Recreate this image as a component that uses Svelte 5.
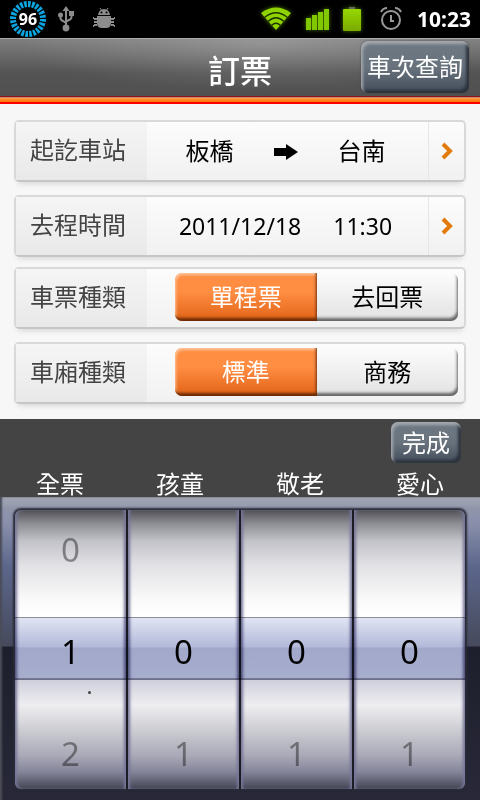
<script lang="ts">
  let origin = $state('板橋');
  let destination = $state('台南');
  let date = $state('2011/12/18');
  let time = $state('11:30');

  const choices = $state([
    { name: 'trip', label: '車票種類', options: ['單程票', '去回票'], value: '單程票' },
    { name: 'carriage', label: '車廂種類', options: ['標準', '商務'], value: '標準' }
  ]);

  const tickets = $state([
    { label: '全票', count: 1 },
    { label: '孩童', count: 0 },
    { label: '敬老', count: 0 },
    { label: '愛心', count: 0 }
  ]);

  const signalBars = [12, 15, 18, 21];
</script>

<div class="screen">
  <div class="status">
    <div class="status-side">
      <svg width="38" height="38" viewBox="0 0 38 38">
        <circle cx="19" cy="19" r="15" fill="none" stroke="#0aa5e0" stroke-width="6" pathLength="120" stroke-dasharray="3.4 1.6" />
        <text x="19" y="25" text-anchor="middle" class="level">96</text>
      </svg>
      <svg class="usb" width="18" height="26" viewBox="0 0 18 26">
        <path d="M9 4v18M3.500 9v3q0 2 2.500 3l3 2M14.500 8v3q0 2-2.500 3l-3 1.500" fill="none" stroke="#8c8c8c" stroke-width="2" />
        <path d="M9 0l3.500 5h-7zM12 5h5v5h-5z" fill="#8c8c8c" />
        <circle cx="3.500" cy="9" r="2.500" fill="#8c8c8c" />
        <circle cx="9" cy="22" r="3.400" fill="#8c8c8c" />
      </svg>
      <svg class="robot" width="22" height="22" viewBox="0 0 22 22">
        <path d="M7 0l2 3M15 0l-2 3" stroke="#8c8c8c" stroke-width="1" fill="none" />
        <path d="M0 9h1v1h3v2H1v-1H0zM1 13h3v2H1zM0 18v-1h1v-1h3v2H1v1H0zM22 9h-1v1h-3v2h3v-1h1zM18 13h3v2h-3zM22 18v-1h-1v-1h-3v2h3v1h1z" fill="#8c8c8c" />
        <path d="M5 7q1-6 6-6t6 6zM4 8h14v7q0 5-5 5H9q-5 0-5-5z" fill="#8c8c8c" />
        <circle cx="8.500" cy="4.500" r="1" />
        <circle cx="13.500" cy="4.500" r="1" />
      </svg>
    </div>
    <div class="status-side end">
      <svg class="glow" width="30" height="24" viewBox="0 0 30 24">
        <path d="M15 23L0 6Q15-5 30 6z" fill="#8fd400" />
        <path d="M3.500 10.500Q15 1 26.500 10.500M7 14.500Q15 7 23 14.500M10.500 18.500Q15 14 19.500 18.500" fill="none" stroke="#1c3300" stroke-width="1.300" />
      </svg>
      <svg class="glow" width="24" height="22" viewBox="0 0 24 22">
        {#each signalBars as height, i}
          <rect x={i * 6} y={22 - height} width="5" {height} fill="#82c800" />
        {/each}
      </svg>
      <svg class="glow battery" width="18" height="24" viewBox="0 0 18 24">
        <defs>
          <linearGradient id="charge" x2="0" y2="1">
            <stop offset="0" stop-color="#97d800" />
            <stop offset="1" stop-color="#7aaa00" />
          </linearGradient>
        </defs>
        <path d="M6 0h6v3H6z" fill="#666" />
        <rect y="2" width="18" height="22" rx="1" fill="url(#charge)" />
      </svg>
      <svg class="alarm" width="22" height="24" viewBox="0 0 22 24" fill="none" stroke="#999" stroke-width="2">
        <circle cx="11" cy="13" r="9" />
        <path d="M11 8v6h3M1 5q2-4 6-4M21 5q-2-4-6-4" />
      </svg>
      <span class="clock">10:23</span>
    </div>
  </div>

  <header>
    <h1>訂票</h1>
    <button class="steel query">車次查詢</button>
  </header>
  <div class="stripe"></div>

  <main>
    <div class="group">
      <button class="card">
        <span class="label">起訖車站</span>
        <span class="value route">
          <span>{origin}</span>
          <svg width="24" height="18" viewBox="0 0 24 18"><path d="M0 6h12V2l12 8-12 8v-4H0z" /></svg>
          <span>{destination}</span>
        </span>
        <span class="more">
          <svg width="12" height="18" viewBox="0 0 12 18"><path d="M2 2l7 7-7 7" /></svg>
        </span>
      </button>
      <button class="card">
        <span class="label">去程時間</span>
        <span class="value when">
          <span>{date}</span>
          <span>{time}</span>
        </span>
        <span class="more">
          <svg width="12" height="18" viewBox="0 0 12 18"><path d="M2 2l7 7-7 7" /></svg>
        </span>
      </button>
    </div>

    <div class="group">
      {#each choices as choice}
        <div class="card" role="radiogroup" aria-label={choice.label}>
          <span class="label">{choice.label}</span>
          <div class="segments">
            {#each choice.options as option}
              <label class="segment" class:active={choice.value === option}>
                <input type="radio" name={choice.name} value={option} bind:group={choice.value} />
                {option}
              </label>
            {/each}
          </div>
        </div>
      {/each}
    </div>
  </main>

  <section class="panel">
    <div class="panel-bar">
      <button class="steel done">完成</button>
    </div>
    <div class="names">
      {#each tickets as ticket}
        <span>{ticket.label}</span>
      {/each}
    </div>
    <div class="picker">
      <div class="wheels">
        {#each tickets as ticket}
          <div class="wheel" role="group" aria-label={ticket.label}>
            <button class="near" disabled={ticket.count === 0} onclick={() => ticket.count--}>
              {ticket.count > 0 ? ticket.count - 1 : ''}
            </button>
            <output>{ticket.count}</output>
            <button class="near" onclick={() => ticket.count++}>{ticket.count + 1}</button>
          </div>
        {/each}
      </div>
    </div>
  </section>
</div>

<style>
  :global(body) {
    margin: 0;
    background: #f7f7f7;
  }

  .screen {
    display: flex;
    flex-direction: column;
    min-height: 100vh;
    font-family: "Noto Sans", "Noto Sans CJK TC", sans-serif;
    font-size: 24px;
    color: #000;
  }

  button {
    font: inherit;
    color: inherit;
    border: 0;
    padding: 0;
    background: none;
    cursor: pointer;
  }

  .status {
    display: flex;
    justify-content: space-between;
    height: 38px;
    padding: 0 9px;
    background: #000;
  }

  .status-side {
    display: flex;
    align-items: center;
  }

  .level {
    font-size: 16px;
    font-weight: 700;
    fill: #fff;
  }

  .usb {
    margin-left: 10px;
  }

  .robot {
    margin-left: 18px;
  }

  .end {
    gap: 15px;
  }

  .glow {
    filter: drop-shadow(0 0 2px #4a7000);
  }

  .battery {
    margin-left: -2px;
  }

  .alarm {
    margin-left: 4px;
  }

  .clock {
    font-size: 21px;
    font-weight: 700;
    color: #fff;
  }

  header {
    display: grid;
    grid-template-columns: 1fr auto 1fr;
    align-items: center;
    height: 58px;
    padding: 0 11px;
    background:
      radial-gradient(ellipse at 55% 10%, rgba(255, 255, 255, 0.2), transparent 65%),
      linear-gradient(#808080, #545454 60%, #505050);
    box-shadow: inset 0 1px #aaa;
  }

  .stripe {
    height: 8px;
    background: linear-gradient(#8c1418 1px, #c98a70 1px 2px, #ff9a45 2px, #ff7200 6px, #f00 6px);
  }

  h1 {
    grid-column: 2;
    margin: 0;
    padding-top: 8px;
    font-size: 32px;
    font-weight: 500;
    line-height: 44px;
    color: #fff;
  }

  .steel {
    border-radius: 7px;
    background: linear-gradient(#6e7984, #68737e 50%, #434d5a);
    box-shadow:
      inset 2px 3px 3px #a4a9ae,
      inset -3px -3px 3px #2c333d,
      0 0 2px #444;
    color: #fff;
    line-height: 40px;
  }

  .query {
    justify-self: end;
    height: 52px;
    padding: 0 6px;
  }

  main {
    display: flex;
    flex-direction: column;
    gap: 10px;
    padding: 16px 14px 15px;
  }

  .group {
    display: flex;
    flex-direction: column;
    gap: 13px;
  }

  .card {
    display: flex;
    box-sizing: border-box;
    width: 100%;
    height: 62px;
    border: 2px solid #d9d9d9;
    border-bottom-color: #c6c6c6;
    border-radius: 5px;
    background: linear-gradient(#fcfcfc, #f1f1f1);
    box-shadow: 0 5px 6px -4px rgba(0, 0, 0, 0.16);
    line-height: 56px;
    text-align: left;
  }

  .label {
    box-sizing: border-box;
    flex: 0 0 131px;
    padding-left: 14px;
    background: linear-gradient(#f5f5f5, #e9e9e9);
    color: #444;
  }

  .value {
    display: flex;
    flex: 1;
    align-items: center;
    justify-content: center;
    padding-right: 4px;
  }

  .route {
    gap: 40px;
  }

  .when {
    gap: 32px;
    font-size: 23px;
  }

  .more {
    display: flex;
    flex: 0 0 35px;
    align-items: center;
    justify-content: center;
    border-left: 1px solid #e6e6e6;
  }

  .more path {
    fill: none;
    stroke: #e27a0c;
    stroke-width: 4;
  }

  .segments {
    display: flex;
    flex: 1;
    margin: 4px 6px 6px 28px;
  }

  .segment {
    position: relative;
    flex: 1;
    border-radius: 0 7px 7px 0;
    background: linear-gradient(#fcfcfc, #e2e2e2);
    box-shadow: inset -2px -4px 3px -1px #666;
    line-height: 47px;
    text-align: center;
    cursor: pointer;
  }

  .segment:first-child {
    border-radius: 7px 0 0 7px;
  }

  .segment.active {
    background: linear-gradient(#ff8d42 40%, #e06317);
    box-shadow:
      inset -2px -4px 3px -1px #6b2a04,
      inset 1px 2px 3px #ffc69c;
    color: #fff;
  }

  .segment input {
    position: absolute;
    inset: 0;
    margin: 0;
    opacity: 0;
    cursor: pointer;
  }

  .panel {
    display: flex;
    flex: 1;
    flex-direction: column;
    background: #444;
  }

  .panel-bar {
    display: flex;
    justify-content: flex-end;
    padding: 3px 19px 7px;
  }

  .done {
    height: 41px;
    padding: 0 11px;
  }

  .names {
    display: grid;
    grid-template-columns: repeat(4, 1fr);
    line-height: 27px;
    text-align: center;
    color: #fff;
  }

  .picker {
    flex: 1;
    padding: 13px 15px;
    background: linear-gradient(#a3a8b5, #9095ab 12px, #8a90ac 25px, #5c668b 70px, #464a5c 149px, #1e1f2d 150px, #282838);
    box-shadow: inset 2px 0 2px #4a4c58;
  }

  .wheels {
    position: relative;
    display: grid;
    grid-template-columns: repeat(4, 1fr);
    gap: 2px;
    background: #1c1d24;
    border-radius: 6px;
    box-shadow: 0 0 2px 2px #292b38;
  }

  /* glass strip over the chosen row */
  .wheels::after {
    content: "";
    position: absolute;
    top: 107px;
    left: 0;
    right: 0;
    height: 60px;
    border-top: 1px solid #8c8e9a;
    border-bottom: 2px solid #777a93;
    background: linear-gradient(#e1e4f3, #b2b9d9 29px, #a2a8ca 30px, #a6adcd);
    mix-blend-mode: multiply;
    pointer-events: none;
  }

  .wheel {
    position: relative;
    display: flex;
    flex-direction: column;
    gap: 62px;
    padding: 20px 0 15px;
    background: linear-gradient(#505055, #8b8b92 13px, #c2c2c9 31px, #e1e1e5 55px, #fafafa 90px, #fff 107px, #fff 169px, #cfcfdc 170px, #eeeef1 195px, #cfcfd5 218px, #aaaab8 245px, #85859a 262px, #444454);
    box-shadow:
      inset 3px 0 3px -1px #77769a,
      inset -3px 0 3px -1px #77769a;
    font-size: 33px;
    line-height: 40px;
    text-align: center;
  }

  .wheel:first-child {
    border-radius: 6px 0 0 6px;
  }

  .wheel:last-child {
    border-radius: 0 6px 6px 0;
  }

  .wheel:first-child::after {
    content: "";
    position: absolute;
    top: 181px;
    left: 73px;
    width: 3px;
    height: 3px;
    border-radius: 50%;
    background: #444;
  }

  .near {
    height: 40px;
    color: rgba(0, 0, 0, 0.4);
  }

  output {
    display: block;
  }
</style>
